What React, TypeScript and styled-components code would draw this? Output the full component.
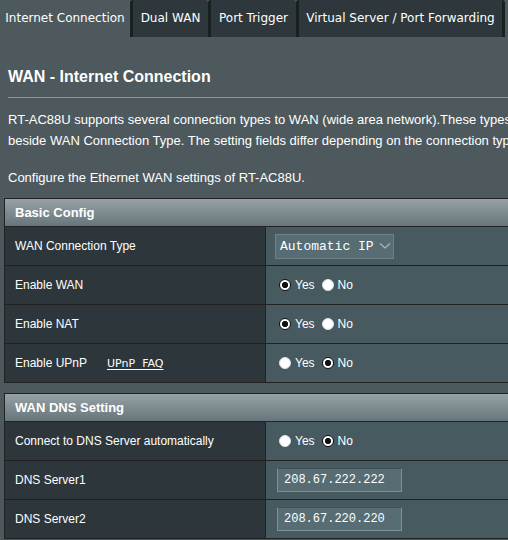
import React from "react";
import styled, { createGlobalStyle } from "styled-components";

const GlobalStyle = createGlobalStyle`
    html, body {
        margin: 0;
        padding: 0;
        background: #4d595d;
        overflow: hidden;
    }
    body {
        font-family: "Liberation Sans", Arial, sans-serif;
        color: #ffffff;
    }
`;

const Page = styled.div`
    width: 760px;
    background: #4d595d;
`;

const TabBar = styled.div`
    display: flex;
    height: 37px;
`;

const Tab = styled.div<{ $active?: boolean; $width: number; $last?: boolean }>`
    width: ${(p) => p.$width}px;
    height: 37px;
    line-height: 37px;
    text-align: center;
    white-space: nowrap;
    font-family: "DejaVu Sans", Verdana, sans-serif;
    font-size: 12px;
    color: #ffffff;
    background: ${(p) => (p.$active ? "#4d595d" : "#2e383c")};
    border-left: ${(p) => (p.$active ? "none" : "3px solid #18211f")};
    border-right: ${(p) => (p.$last ? "3px solid #18211f" : "none")};
    border-radius: 3px 3px 0 0;
`;

const Content = styled.div`
    padding-left: 8px;
`;

const Title = styled.div`
    margin-top: 30px;
    font-size: 16px;
    line-height: 20px;
    font-weight: bold;
`;

const SplitLine = styled.div`
    margin-top: 10px;
    height: 1px;
    width: 752px;
    background: #8a969a;
`;

const Paragraph = styled.p<{ $gap: number }>`
    margin: ${(p) => p.$gap}px 0 0;
    font-size: 13px;
    line-height: 21px;
    white-space: nowrap;
`;

const Section = styled.div<{ $gap: number }>`
    margin: ${(p) => p.$gap}px 0 0 4px;
    width: 745px;
    border: 1px solid #222;
`;

const SectionHeader = styled.div`
    height: 27px;
    line-height: 27px;
    padding-left: 10px;
    font-size: 13px;
    font-weight: bold;
    background: linear-gradient(#95a2a6 0%, #67767b 100%);
`;

const Row = styled.div`
    display: grid;
    grid-template-columns: 261px 1fr;
    height: 38px;
    border-top: 1px solid #222;
`;

const Label = styled.div`
    display: flex;
    align-items: center;
    padding-left: 10px;
    font-size: 12px;
    background: #2d373b;
    border-right: 1px solid #222;
`;

const Value = styled.div`
    display: flex;
    align-items: center;
    padding-left: 13px;
    font-size: 12px;
    background: #475a5f;
`;

const FaqLink = styled.a`
    margin-left: 20px;
    font-family: "DejaVu Sans", Verdana, sans-serif;
    font-size: 11px;
    color: #ffffff;
    white-space: pre;
    text-decoration: underline;
    text-underline-offset: 2px;
`;

const RadioDot = styled.span<{ $checked?: boolean }>`
    display: inline-block;
    box-sizing: border-box;
    width: 12px;
    height: 12px;
    border-radius: 50%;
    border: 1px solid ${(p) => (p.$checked ? "#151515" : "#e0e0e0")};
    background: ${(p) =>
        p.$checked
            ? "radial-gradient(circle, #111 0 2.8px, #ffffff 3.4px)"
            : "#ffffff"};
    margin-right: 4px;
`;

const RadioLabel = styled.label`
    display: inline-flex;
    align-items: center;
    margin-right: 7px;
    font-size: 12px;
`;

const SelectBox = styled.div`
    box-sizing: border-box;
    display: flex;
    align-items: center;
    justify-content: space-between;
    width: 119px;
    height: 25px;
    margin-left: -4px;
    padding: 0 2px 0 4px;
    background: #576d73;
    border: 1px solid #6d8388;
    font-family: "Liberation Mono", "Courier New", monospace;
    font-size: 13px;
    color: #ffffff;
`;

const TextInput = styled.div`
    box-sizing: border-box;
    width: 125px;
    height: 24px;
    line-height: 22px;
    margin-left: -2px;
    padding-left: 6px;
    background: #576d73;
    border: 1px solid #7f9196;
    border-top-color: #3f4f54;
    font-family: "Liberation Mono", "Courier New", monospace;
    font-size: 12px;
    color: #ffffff;
`;

const Chevron = () => (
    <svg width="12" height="8" viewBox="0 0 12 8">
        <path d="M1 1.5 L6 6 L11 1.5" fill="none" stroke="#a9b6ba" strokeWidth="1.2" />
    </svg>
);

const YesNo: React.FC<{ yes: boolean }> = ({ yes }) => (
    <>
        <RadioLabel>
            <RadioDot $checked={yes} />
            Yes
        </RadioLabel>
        <RadioLabel>
            <RadioDot $checked={!yes} />
            No
        </RadioLabel>
    </>
);

const tabs = [
    { name: "Internet Connection", width: 130, active: true },
    { name: "Dual WAN", width: 75 },
    { name: "Port Trigger", width: 85 },
    { name: "Virtual Server / Port Forwarding", width: 203, last: true },
];

export default function App() {
    return (
        <Page>
            <GlobalStyle />
            <TabBar>
                {tabs.map((t) => (
                    <Tab key={t.name} $active={t.active} $width={t.width} $last={t.last}>
                        {t.name}
                    </Tab>
                ))}
            </TabBar>
            <Content>
                <Title>WAN - Internet Connection</Title>
                <SplitLine />
                <Paragraph $gap={11}>
                    RT-AC88U supports several connection types to WAN (wide area network).These types are selected from the dropdown menu
                    <br />
                    beside WAN Connection Type. The setting fields differ depending on the connection type you selected.
                </Paragraph>
                <Paragraph $gap={16}>Configure the Ethernet WAN settings of RT-AC88U.</Paragraph>
            </Content>
            <Section $gap={10}>
                <SectionHeader>Basic Config</SectionHeader>
                <Row>
                    <Label>WAN Connection Type</Label>
                    <Value>
                        <SelectBox>
                            Automatic IP
                            <Chevron />
                        </SelectBox>
                    </Value>
                </Row>
                <Row>
                    <Label>Enable WAN</Label>
                    <Value>
                        <YesNo yes />
                    </Value>
                </Row>
                <Row>
                    <Label>Enable NAT</Label>
                    <Value>
                        <YesNo yes />
                    </Value>
                </Row>
                <Row>
                    <Label>
                        Enable UPnP
                        <FaqLink>UPnP  FAQ</FaqLink>
                    </Label>
                    <Value>
                        <YesNo yes={false} />
                    </Value>
                </Row>
            </Section>
            <Section $gap={10}>
                <SectionHeader>WAN DNS Setting</SectionHeader>
                <Row>
                    <Label>Connect to DNS Server automatically</Label>
                    <Value>
                        <YesNo yes={false} />
                    </Value>
                </Row>
                <Row>
                    <Label>DNS Server1</Label>
                    <Value>
                        <TextInput>208.67.222.222</TextInput>
                    </Value>
                </Row>
                <Row>
                    <Label>DNS Server2</Label>
                    <Value>
                        <TextInput>208.67.220.220</TextInput>
                    </Value>
                </Row>
            </Section>
        </Page>
    );
}
